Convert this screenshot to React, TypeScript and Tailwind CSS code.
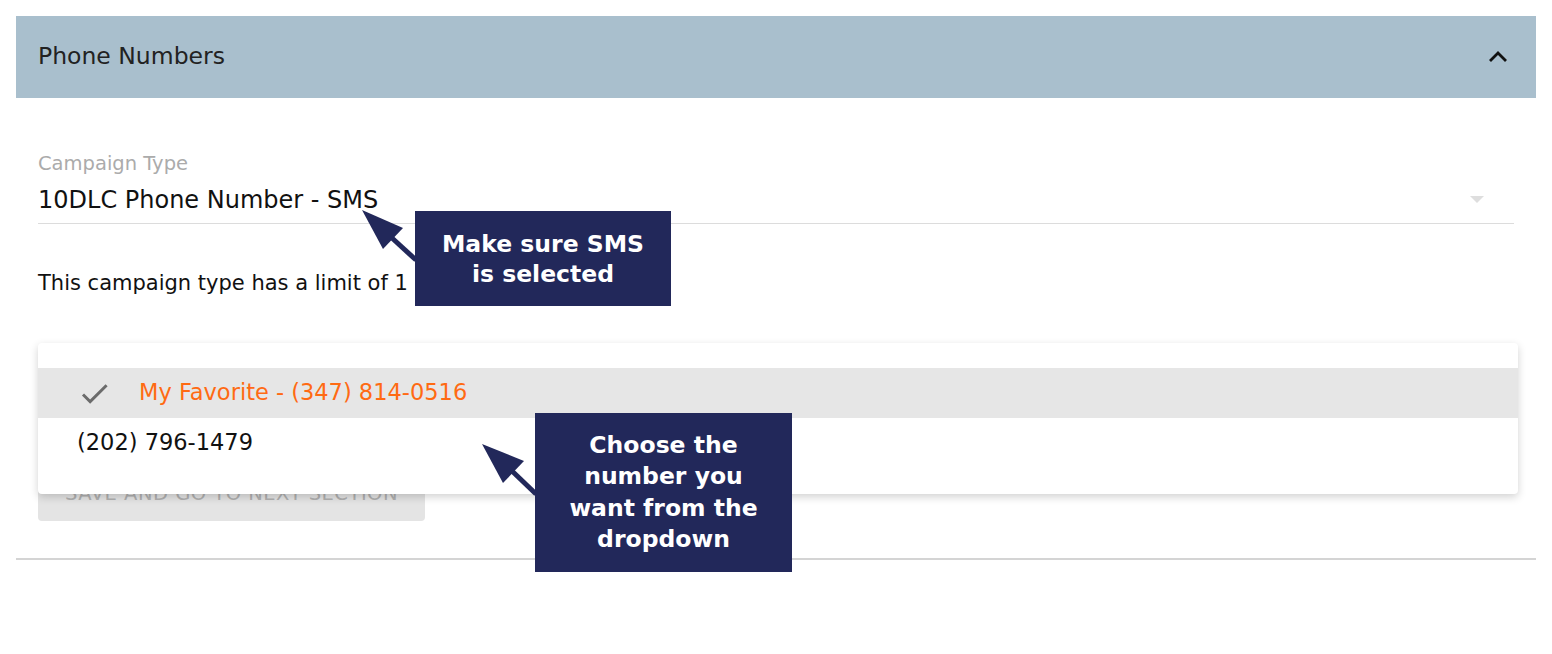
import React from "react";

const font = { fontFamily: '"DejaVu Sans", "Open Sans", sans-serif' };

const Callout = ({ lines, className }: { lines: string[]; className: string }) => (
    <div className={`absolute bg-[#22285a] text-white font-bold flex flex-col items-center justify-center text-center ${className}`}>
        {lines.map((l) => (
            <span key={l}>{l}</span>
        ))}
    </div>
);

export default function App() {
    return (
        <div className="relative w-[1552px] h-[654px] bg-white pt-4 px-4 overflow-hidden" style={font}>
            <div className="border-b-2 border-[#d4d4d4]">
                {/* header */}
                <div className="h-[82px] bg-[#a9bfcd] flex items-center justify-between pl-[22px] pr-[28px]">
                    <span className="text-[23.5px] leading-[30px] text-[#222] -mt-[3px]">Phone Numbers</span>
                    <svg width="20" height="14" viewBox="0 0 20 14" className="-mt-[2px]">
                        <polyline points="2,12 10,4 18,12" fill="none" stroke="#111" strokeWidth="2.8" />
                    </svg>
                </div>

                {/* body */}
                <div className="px-[22px] pt-[54px] pb-[37px]">
                    <div className="border-b border-[#dcdcdc] pr-[30px]">
                        <div className="text-[19.5px] leading-[24px] text-[#ababab]">Campaign Type</div>
                        <div className="flex items-center justify-between pt-[8px] pb-[7px]">
                            <span className="text-[24px] leading-[32px] text-[#111]">10DLC Phone Number - SMS</span>
                            <svg width="14" height="8" viewBox="0 0 14 8">
                                <polygon points="0,0 14,0 7,7" fill="#dedede" />
                            </svg>
                        </div>
                    </div>
                    <p className="mt-[45px] text-[21px] leading-[28px] text-[#111]">
                        This campaign type has a limit of 1 number.
                    </p>
                    <button className="mt-[183px] w-[387px] h-[41px] rounded bg-[#e4e4e4] text-[#b0b0b0] text-[19.5px] tracking-wide flex items-center justify-center pb-[14px]">
                        SAVE AND GO TO NEXT SECTION
                    </button>
                </div>
            </div>

            {/* dropdown menu */}
            <div className="absolute left-[38px] top-[343px] w-[1480px] h-[151px] bg-white rounded shadow-[0_3px_8px_rgba(0,0,0,0.18)] pt-[25px]">
                <div className="h-[50px] bg-[#e6e6e6] flex items-center">
                    <svg width="35" height="35" viewBox="0 0 24 24" className="ml-[39px]">
                        <path d="M9 16.17L4.83 12l-1.42 1.41L9 19 21 7l-1.41-1.41z" fill="#6b6b6b" />
                    </svg>
                    <span className="ml-[27px] text-[22.5px] text-[#ff6a13]">My Favorite - (347) 814-0516</span>
                </div>
                <div className="h-[50px] flex items-center pl-[39px]">
                    <span className="text-[22.5px] text-[#111]">(202) 796-1479</span>
                </div>
            </div>

            {/* callouts */}
            <Callout lines={["Make sure SMS", "is selected"]} className="left-[415px] top-[211px] w-[256px] h-[95px] text-[23.5px] leading-[30px]" />
            <Callout
                lines={["Choose the", "number you", "want from the", "dropdown"]}
                className="left-[535px] top-[413px] w-[257px] h-[159px] text-[23.5px] leading-[31.5px]"
            />

            {/* arrows */}
            <svg className="absolute inset-0 pointer-events-none" width="1552" height="654">
                <line x1="392" y1="238" x2="416" y2="260" stroke="#22285a" strokeWidth="5" />
                <polygon points="362,210 383,249 403,228" fill="#22285a" />
                <line x1="512" y1="471" x2="536" y2="494" stroke="#22285a" strokeWidth="5" />
                <polygon points="482,444 503,483 524,461" fill="#22285a" />
            </svg>
        </div>
    );
}
